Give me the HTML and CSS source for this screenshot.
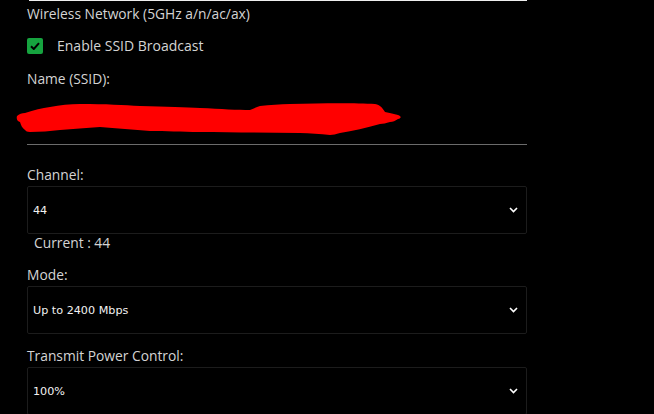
FILE: index.html
```html
<!DOCTYPE html>
<html lang="en">
<head>
    <meta charset="UTF-8">
    <meta name="viewport" content="width=device-width, initial-scale=1.0">
    <title>Wireless Settings</title>
    <link rel="stylesheet" href="styles.css">
</head>
<body>
    <div class="panel">
        <div class="top-edge"></div>
        <h2 class="section-title">Wireless Network (5GHz a/n/ac/ax)</h2>

        <label class="check-row">
            <span class="checkbox">
                <svg width="10" height="8" viewBox="0 0 10 8">
                    <path d="M1 4.2 L3.8 7 L9 1.2" fill="none" stroke="#000" stroke-width="2"/>
                </svg>
            </span>
            Enable SSID Broadcast
        </label>

        <div class="field-label">Name (SSID):</div>
        <div class="ssid-box">
            <!-- hidden network name, scribbled over -->
            <svg class="scribble" width="388" height="38" viewBox="0 0 388 38">
                <path d="M1 17 C3 15 6 14 9 14 C18 11 26 9 34 8 C44 6 54 5 64 5 C90 5 108 6 124 7 C150 8 170 8 184 9 C205 10 222 11 234 11 C238 9 241 8 244 7 C254 6 264 5 274 5 C310 4 340 4 359 5 C365 6 367 10 369 13 C374 14 378 15 382 16 C385 17 386 19 382 20 C379 22 377 23 374 23 C370 24 367 25 364 25 C350 29 337 32 324 34 C320 35 317 36 314 36 C304 35 294 34 284 34 C250 34 214 33 184 33 C165 33 150 32 134 32 C118 31 100 29 84 28 C70 29 57 30 44 31 C34 32 24 33 14 33 C11 33 10 32 9 31 C6 29 5 26 4 23 C2 22 0 21 1 17 Z" fill="#ff0000"/>
            </svg>
        </div>
        <hr class="divider">

        <div class="field-label">Channel:</div>
        <div class="select-box">
            <span>44</span>
            <svg class="chevron" width="9" height="6" viewBox="0 0 9 6"><path d="M1 1 L4.5 4.5 L8 1" fill="none" stroke="#fff" stroke-width="1.6"/></svg>
        </div>
        <div class="current">Current : 44</div>

        <div class="field-label">Mode:</div>
        <div class="select-box">
            <span>Up to 2400 Mbps</span>
            <svg class="chevron" width="9" height="6" viewBox="0 0 9 6"><path d="M1 1 L4.5 4.5 L8 1" fill="none" stroke="#fff" stroke-width="1.6"/></svg>
        </div>

        <div class="field-label">Transmit Power Control:</div>
        <div class="select-box">
            <span>100%</span>
            <svg class="chevron" width="9" height="6" viewBox="0 0 9 6"><path d="M1 1 L4.5 4.5 L8 1" fill="none" stroke="#fff" stroke-width="1.6"/></svg>
        </div>
    </div>
</body>
</html>
```
FILE: styles.css
```css
body{
    margin: 0;
    background-color: #000;
    font-family: "Open Sans", "Noto Sans", sans-serif;
    color: #d4d4d4;
}
.panel{
    width: 500px;
    margin-left: 27px;
    display: flex;
    flex-direction: column;
}
.top-edge{
    height: 1px;
    margin-left: 2px;
    background-color: #eee;
}
.section-title{
    margin: 3px 0 0 0;
    font-size: 13.8px;
    font-weight: normal;
    line-height: 20px;
}
.check-row{
    display: flex;
    align-items: center;
    gap: 14px;
    margin-top: 13px;
    font-size: 14px;
    line-height: 18px;
}
.checkbox{
    width: 16px;
    height: 16px;
    border-radius: 2px;
    background-color: #16a33f;
    display: flex;
    align-items: center;
    justify-content: center;
}
.field-label{
    font-size: 13.8px;
    line-height: 18px;
    margin-top: 15px;
}
.ssid-box{
    height: 48px;
    margin-left: -11px;
    padding-top: 11px;
    box-sizing: border-box;
}
.scribble{
    display: block;
}
.divider{
    border: none;
    border-top: 1px solid #6b6b6b;
    margin: 8px 0 0 0;
}
.divider + .field-label{
    margin-top: 21px;
}
.select-box{
    height: 46px;
    margin-top: 2px;
    border: 1px solid #1c1c1c;
    border-radius: 2px;
    display: flex;
    align-items: center;
    justify-content: space-between;
    padding: 0 6px 0 5px;
    font-family: "DejaVu Sans", "Noto Sans", sans-serif;
    font-size: 11.2px;
    color: #f2f2f2;
}
.select-box + .field-label{
    margin-top: 13px;
}
.chevron{
    margin-right: 2px;
}
.current{
    margin-left: 7px;
    font-size: 13.8px;
    line-height: 18px;
}
.current + .field-label{
    margin-top: 14px;
}
```
